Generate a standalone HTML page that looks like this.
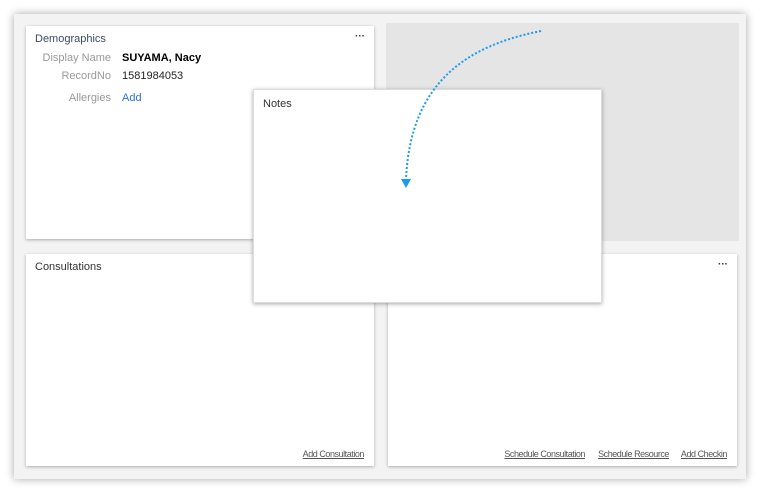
<!DOCTYPE html>
<html><head><style>
body{margin:0;width:760px;height:493px;background:#fff;font-family:"Liberation Sans",sans-serif;position:relative;overflow:hidden}
.frame{position:absolute;left:14px;top:14px;width:732px;height:465px;background:#f3f3f3;box-shadow:0 0 8px rgba(0,0,0,.35)}
.card{position:absolute;background:#fff;box-shadow:0 1px 3px rgba(0,0,0,.3)}
.t{position:absolute;left:9px;top:7px;font-size:11px;color:#333}
.dots{position:absolute;right:9px;top:5px;font-size:10px;font-weight:bold;color:#333}
.lbl{position:absolute;font-size:11px;color:#999;text-align:right;width:80px;left:5px}
.val{position:absolute;left:96px;font-size:11px;color:#222}
.lnk{position:absolute;font-size:9px;color:#555;text-decoration:underline;bottom:7px;letter-spacing:-0.45px}
</style></head><body>
<div class="frame"></div>
<div class="card" style="left:26px;top:26px;width:348px;height:213px">
<div class="t" style="color:#3a4a6a">Demographics</div><div class="dots">···</div>
<div class="lbl" style="top:26px">Display Name</div><div class="val" style="top:26px;font-weight:bold;color:#000">SUYAMA, Nacy</div>
<div class="lbl" style="top:44px">RecordNo</div><div class="val" style="top:44px">1581984053</div>
<div class="lbl" style="top:66px">Allergies</div><div class="val" style="top:66px;color:#2a72d6">Add</div>
</div>
<div style="position:absolute;left:386px;top:23px;width:353px;height:218px;background:#e5e5e5"></div>
<div class="card" style="left:26px;top:254px;width:348px;height:212px">
<div class="t">Consultations</div>
<div class="lnk" style="right:10px">Add Consultation</div></div>
<div class="card" style="left:388px;top:254px;width:349px;height:212px">
<div class="dots">···</div>
<div class="lnk" style="right:152px">Schedule Consultation</div>
<div class="lnk" style="right:68px">Schedule Resource</div>
<div class="lnk" style="right:10px">Add Checkin</div></div>
<div class="card" style="left:253px;top:89px;width:349px;height:214px;border:1px solid #ddd;box-sizing:border-box;box-shadow:0 1px 4px rgba(0,0,0,.35)">
<div class="t" style="left:9px;top:8px">Notes</div></div>
<svg style="position:absolute;left:0;top:0" width="760" height="493">
<path d="M541 31 C470 45 410 80 406 180" fill="none" stroke="#1a9af0" stroke-width="2" stroke-dasharray="2 2"/>
<path d="M401 179 L411 179 L406 188 Z" fill="#1a9af0"/>
</svg>
</body></html>
